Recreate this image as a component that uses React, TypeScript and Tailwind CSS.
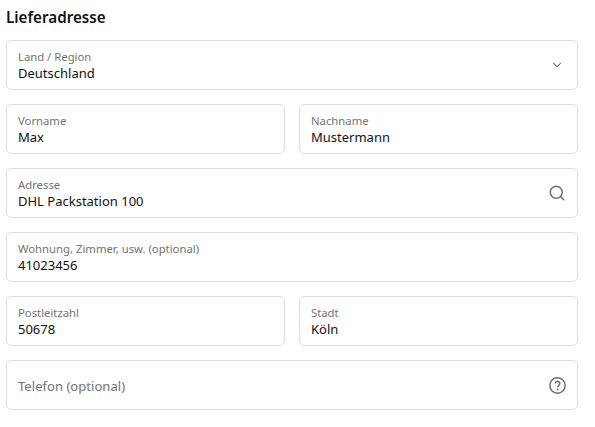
import { ChevronDown, Search } from "lucide-react";
import type { ReactNode } from "react";

const Field = ({ label, value, icon }: { label: string; value?: string; icon?: ReactNode }) => (
    <div className="flex h-[50px] min-w-0 items-center justify-between rounded-[5px] border border-[#dedede] bg-white pl-[11px] pr-[11px]">
        {value ? (
            <div className="flex flex-col pt-[2px]">
                <span className="text-[11.3px] leading-[15px] text-[#737373]">{label}</span>
                <span className="text-[13px] leading-[19px] text-[#111111]">{value}</span>
            </div>
        ) : (
            <span className="pt-[4px] text-[13.1px] text-[#737373]">{label}</span>
        )}
        {icon}
    </div>
);

export default function App() {
    return (
        <div className="min-h-[427px] w-[595px] bg-white pl-[6px] pr-[17px] pt-[6px] font-['Noto_Sans',sans-serif]">
            <h2 className="mb-[11px] text-[15.2px] font-semibold leading-[23px] text-[#111111]">Lieferadresse</h2>
            <div className="flex flex-col gap-[14px]">
                <Field
                    label="Land / Region"
                    value="Deutschland"
                    icon={<ChevronDown className="mr-[2px] h-[14px] w-[14px] text-[#555555]" strokeWidth={1.8} />}
                />
                <div className="grid grid-cols-2 gap-[14px]">
                    <Field label="Vorname" value="Max" />
                    <Field label="Nachname" value="Mustermann" />
                </div>
                <Field
                    label="Adresse"
                    value="DHL Packstation 100"
                    icon={<Search className="h-[18px] w-[18px] text-[#707070]" strokeWidth={2} />}
                />
                <Field label="Wohnung, Zimmer, usw. (optional)" value="41023456" />
                <div className="grid grid-cols-2 gap-[14px]">
                    <Field label="Postleitzahl" value="50678" />
                    <Field label="Stadt" value="Köln" />
                </div>
                <Field
                    label="Telefon (optional)"
                    icon={
                        <svg viewBox="0 0 16 16" className="h-[17px] w-[17px] text-[#707070]" fill="none" stroke="currentColor">
                            <circle cx="8" cy="8" r="7.2" strokeWidth="1.4" />
                            <path d="M5.9 6.2a2.1 2.1 0 1 1 3.3 1.7c-.7.5-1.2.9-1.2 1.8" strokeWidth="1.5" />
                            <circle cx="8" cy="11.8" r="0.9" fill="currentColor" stroke="none" />
                        </svg>
                    }
                />
            </div>
        </div>
    );
}
